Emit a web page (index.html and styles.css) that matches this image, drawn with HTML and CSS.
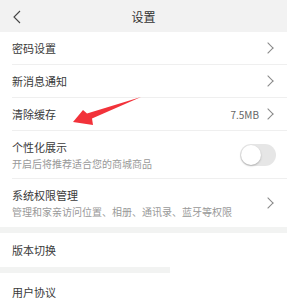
FILE: index.html
```html
<!DOCTYPE html>
<html lang="zh">
<head>
  <meta charset="UTF-8" />
  <title>设置</title>
  <link rel="stylesheet" href="styles.css">
</head>
<body>

  <div class="header">
    <svg class="back" width="10" height="14" viewBox="0 0 10 14">
      <path d="M8 1 L2 7 L8 13" fill="none" stroke="#444" stroke-width="1.1"/>
    </svg>
    <span class="title">设置</span>
  </div>

  <div class="list">
    <div class="row">
      <span class="label">密码设置</span>
      <span class="chevron"></span>
    </div>
    <div class="row">
      <span class="label">新消息通知</span>
      <span class="chevron"></span>
    </div>
    <div class="row">
      <span class="label">清除缓存</span>
      <span class="value">7.5MB</span>
      <span class="chevron"></span>
    </div>
    <div class="row tall">
      <div class="text">
        <div class="label">个性化展示</div>
        <div class="sub">开启后将推荐适合您的商城商品</div>
      </div>
      <div class="switch"><span class="knob"></span></div>
    </div>
    <div class="row tall last">
      <div class="text">
        <div class="label">系统权限管理</div>
        <div class="sub">管理和家亲访问位置、相册、通讯录、蓝牙等权限</div>
      </div>
      <span class="chevron"></span>
    </div>
  </div>

  <div class="gap"></div>

  <div class="list">
    <div class="row version">
      <span class="label">版本切换</span>
    </div>
  </div>

  <div class="gap short"></div>

  <div class="list">
    <div class="row agreement">
      <span class="label">用户协议</span>
    </div>
  </div>

  <!-- annotation arrow -->
  <svg class="arrow" width="287" height="304" viewBox="0 0 287 304">
    <polygon points="73,122 83,110 87,113.5 141,97 92,118.5 93,125" fill="#f2323a"/>
  </svg>

</body>
</html>
```

FILE: styles.css
```css
body {
  margin: 0;
  font-family: "Noto Sans CJK SC", "Noto Sans", sans-serif;
  color: #333;
  background: #fff;
  overflow: hidden;
  position: relative;
  height: 304px;
}

.header {
  height: 32px;
  background: #f2f2f2;
  display: flex;
  align-items: center;
  justify-content: center;
  position: relative;
}

.header .back {
  position: absolute;
  left: 12px;
  top: 10px;
}

.title {
  font-size: 12px;
  color: #333;
}

.list {
  background: #fff;
}

.row {
  height: 32px;
  margin-left: 12px;
  padding-right: 12px;
  border-bottom: 1px solid #efefef;
  display: flex;
  align-items: center;
}

.row.tall {
  height: 47px;
}

.row.last {
  border-bottom: none;
  height: 48px;
}

.row.version {
  height: 34px;
  border-bottom: none;
}

.row.agreement {
  height: 38px;
  border-bottom: none;
}

.label {
  font-size: 11px;
  color: #3a3a3a;
  flex: 1;
}

.text {
  flex: 1;
}

.text .label {
  line-height: 16px;
}

.sub {
  font-size: 10px;
  color: #999;
  line-height: 14px;
  margin-top: 2px;
}

.value {
  font-size: 10px;
  color: #666;
  margin-right: 5px;
}

.chevron {
  width: 7px;
  height: 7px;
  border-top: 1px solid #888;
  border-right: 1px solid #888;
  transform: rotate(45deg);
  margin-right: 3px;
}

.switch {
  width: 36px;
  height: 22px;
  border-radius: 11px;
  background: #e6e6e6;
  position: relative;
  margin-right: -1px;
}

.knob {
  position: absolute;
  left: 1px;
  top: 1px;
  width: 20px;
  height: 20px;
  border-radius: 50%;
  background: #fff;
  box-shadow: 0 1px 2px rgba(0, 0, 0, 0.25);
}

.gap {
  height: 6px;
  background: #f2f3f2;
}

.gap.short {
  width: 170px;
}

.arrow {
  position: absolute;
  left: 0;
  top: 0;
  pointer-events: none;
}
```
